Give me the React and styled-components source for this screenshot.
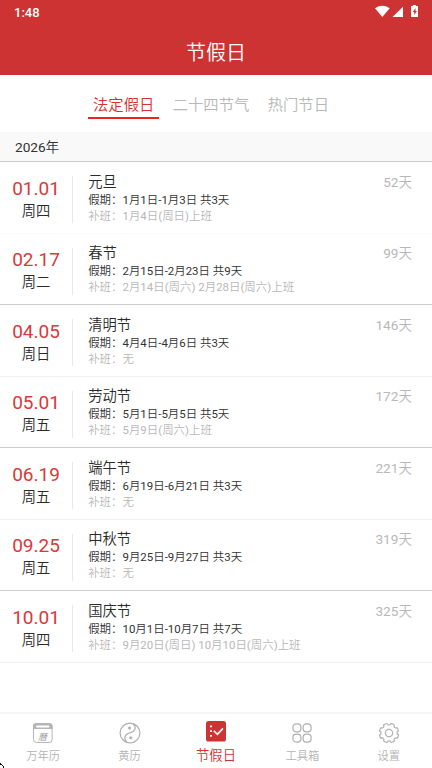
import React from 'react'
import styled, { createGlobalStyle } from 'styled-components'

const holidays = [
  { date: '01.01', week: '周四', name: '元旦', period: '1月1日-1月3日 共3天', work: '1月4日(周日)上班', left: 52 },
  { date: '02.17', week: '周二', name: '春节', period: '2月15日-2月23日 共9天', work: '2月14日(周六) 2月28日(周六)上班', left: 99 },
  { date: '04.05', week: '周日', name: '清明节', period: '4月4日-4月6日 共3天', work: '无', left: 146 },
  { date: '05.01', week: '周五', name: '劳动节', period: '5月1日-5月5日 共5天', work: '5月9日(周六)上班', left: 172 },
  { date: '06.19', week: '周五', name: '端午节', period: '6月19日-6月21日 共3天', work: '无', left: 221 },
  { date: '09.25', week: '周五', name: '中秋节', period: '9月25日-9月27日 共3天', work: '无', left: 319 },
  { date: '10.01', week: '周四', name: '国庆节', period: '10月1日-10月7日 共7天', work: '9月20日(周日) 10月10日(周六)上班', left: 325 },
]

const tabs = ['法定假日', '二十四节气', '热门节日']

function CalendarIcon() {
  return (
    <svg width="22" height="22" viewBox="0 0 22 22" fill="none">
      <rect x="1.5" y="1.5" width="18.6" height="19" rx="3" stroke="#b5b5b5" />
      <path d="M1 7V4.5Q1 1 4.5 1h12.6Q20.6 1 20.6 4.5V7z" fill="#b5b5b5" />
      <rect x="4" y="3.6" width="13.5" height="2" rx="1" fill="#fff" />
      <text x="6" y="18" fontSize="9" fontStyle="italic" fill="#959595">曆</text>
    </svg>
  )
}

function TaijiIcon() {
  return (
    <svg width="22" height="22" viewBox="0 0 22 22" fill="none" stroke="#b0b0b0" strokeWidth="1.2">
      <circle cx="11" cy="11" r="9.9" />
      <path d="M14.2 1.8C18 5.5 16 9.5 11.5 10.7C5.5 12.2 4.2 16.5 7.8 20.2" />
      <circle cx="10.5" cy="6" r="1.5" fill="#b0b0b0" stroke="none" />
      <circle cx="11.7" cy="15.8" r="1.5" fill="#b0b0b0" stroke="none" />
    </svg>
  )
}

function ChecklistIcon() {
  return (
    <svg width="22" height="22" viewBox="0 0 22 22" fill="none">
      <rect x="1" y="1" width="20" height="20.5" rx="2.6" fill="#cd3333" />
      <path d="M5 5.5h2v1.8H5zM5 10.2h2V12H5zM5 15h2v1.8H5z" fill="#fff" />
      <path d="M8.8 10.8l3.6 3.6 5.6-6" stroke="#fff" strokeWidth="1.6" />
    </svg>
  )
}

function ToolsIcon() {
  return (
    <svg width="22" height="22" viewBox="0 0 22 22" fill="none" stroke="#b0b0b0" strokeWidth="1.2">
      <rect x="1.9" y="1.9" width="8" height="8" rx="3.3" />
      <rect x="12.1" y="1.9" width="8" height="8" rx="3.3" />
      <rect x="1.9" y="12.1" width="8" height="8" rx="3.3" />
      <rect x="12.1" y="12.1" width="8" height="8" rx="3.3" />
    </svg>
  )
}

function GearIcon() {
  const notches = [0, 45, 90, 135, 180, 225, 270, 315]
  return (
    <svg width="22" height="22" viewBox="0 0 22 22" fill="none" stroke="#b0b0b0" strokeWidth="1.2">
      <circle cx="11" cy="11" r="3.7" />
      {notches.map((a) => (
        <path
          key={a}
          transform={`rotate(${a} 11 11)`}
          d="M9.2 1.5Q9.4 3.1 11 3.1T12.8 1.5Q14.9 1.8 16.4 3"
        />
      ))}
    </svg>
  )
}

const navItems = [
  { label: '万年历', icon: <CalendarIcon /> },
  { label: '黄历', icon: <TaijiIcon /> },
  { label: '节假日', icon: <ChecklistIcon />, active: true },
  { label: '工具箱', icon: <ToolsIcon /> },
  { label: '设置', icon: <GearIcon /> },
]

function App() {
  return (
    <>
      <GlobalStyle />
      <Page>
        <Header>
          <StatusBar>
            <Clock>1:48</Clock>
            <svg width="46" height="14" viewBox="0 0 46 14" fill="#fff">
              <path d="M1 3.2Q8.3-1.7 15.7 3.2L8.3 12z" />
              <path d="M29 1.7V12H18.5z" />
              <path d="M37 1h1.8V0H42v1h2v11h-7zM41.5 3l-2.7 4h1.4v3l2.7-4h-1.4z" fillRule="evenodd" />
            </svg>
          </StatusBar>
          <Title>节假日</Title>
        </Header>
        <Tabs>
          {tabs.map((tab, i) => (
            <Tab key={tab} $active={i === 0}>{tab}</Tab>
          ))}
        </Tabs>
        <Year>2026年</Year>
        <List>
          {holidays.map((item, i) => (
            <Row key={item.date} $strong={i % 2 === 1} $first={i === 0}>
              <DateBox>
                <Day>{item.date}</Day>
                <Week>{item.week}</Week>
              </DateBox>
              <Divider />
              <Info>
                <Name>{item.name}</Name>
                <Detail>假期：{item.period}</Detail>
                <Detail $muted>补班：{item.work}</Detail>
              </Info>
              <Left>{item.left}天</Left>
            </Row>
          ))}
        </List>
        <Nav>
          {navItems.map((item) => (
            <NavItem key={item.label} $active={item.active}>
              {item.icon}
              <span>{item.label}</span>
            </NavItem>
          ))}
        </Nav>
        <Corner width="5" height="5" viewBox="0 0 5 5">
          <path d="M0 0h1v1H0zM1 1h1v1H1zM2 2h1v1H2zM3 3h1v2H3zM0 1h1v1H0z" fill="#111" />
        </Corner>
      </Page>
    </>
  )
}

export default App

const GlobalStyle = createGlobalStyle`
  * {
    box-sizing: border-box;
  }
  body {
    margin: 0;
    background: #fff;
    font-family: Roboto, "Noto Sans CJK SC DemiLight", "Noto Sans CJK SC Light", "Noto Sans CJK SC", sans-serif;
    font-weight: 400;
  }
`

const Page = styled.div`
  position: relative;
  display: flex;
  flex-direction: column;
  width: 432px;
  height: 768px;
  overflow: hidden;
  background: #fff;
`

const Header = styled.header`
  flex: none;
  height: 75px;
  background: #cd3333;
  color: #fff;
`

const StatusBar = styled.div`
  display: flex;
  justify-content: space-between;
  height: 28px;
  padding: 5px 12px 0 14px;
`

const Clock = styled.span`
  font-size: 13px;
  font-weight: 500;
  line-height: 15px;
`

const Title = styled.h1`
  margin: 0;
  font-size: 20px;
  font-weight: 400;
  line-height: 50px;
  text-align: center;
`

const Tabs = styled.div`
  display: flex;
  flex: none;
  justify-content: center;
  gap: 8.5px;
  height: 57px;
  padding: 16px 10px 0 0;
`

const Tab = styled.div`
  height: 28px;
  padding: 0 5px;
  border-bottom: 2px solid ${(props) => (props.$active ? '#ee2222' : 'transparent')};
  color: ${(props) => (props.$active ? '#d63030' : '#b8b8b8')};
  font-size: 15.3px;
  line-height: 28px;
  white-space: nowrap;
`

const Year = styled.div`
  flex: none;
  height: 30px;
  padding-left: 15px;
  border-bottom: 1px solid #c9c9c9;
  background: #f9f9f9;
  color: #333;
  font-size: 13.6px;
  line-height: 30px;
`

const List = styled.div`
  flex: 1;
`

const Row = styled.div`
  display: flex;
  height: 71.5px;
  padding-right: 20px;
  border-bottom: 1px solid ${(props) => (props.$strong ? '#cbcbcb' : props.$first ? '#fafafa' : '#f0f0f0')};
`

const DateBox = styled.div`
  width: 72px;
  padding-top: 14.5px;
  text-align: center;
`

const Day = styled.div`
  color: #d63a3a;
  font-size: 19px;
  line-height: 24px;
`

const Week = styled.div`
  color: #2a2a2a;
  font-size: 14.3px;
  line-height: 21px;
`

const Divider = styled.div`
  width: 1px;
  height: 47px;
  margin-top: 14px;
  background: #e8e8e8;
`

const Info = styled.div`
  flex: 1;
  padding: 9.8px 0 0 15.2px;
`

const Name = styled.div`
  color: #2a2a2a;
  font-size: 14.3px;
  line-height: 20px;
`

const Detail = styled.div`
  color: ${(props) => (props.$muted ? '#b8b8b8' : '#333')};
  font-size: 11.45px;
  line-height: 16px;
  white-space: nowrap;
`

const Left = styled.div`
  padding-top: 9.8px;
  color: #b8b8b8;
  font-size: 13.6px;
  line-height: 20px;
`

const Nav = styled.nav`
  display: flex;
  flex: none;
  height: 56px;
  border-top: 2px solid #f6f6f6;
`

const NavItem = styled.div`
  display: flex;
  flex: 1;
  flex-direction: column;
  align-items: center;
  padding-top: ${(props) => (props.$active ? 6 : 8)}px;
  color: ${(props) => (props.$active ? '#cd3333' : '#b3b3b3')};
  font-size: ${(props) => (props.$active ? 13.3 : 11.3)}px;

  svg {
    flex: none;
  }

  span {
    line-height: ${(props) => (props.$active ? 28 : 26)}px;
  }
`

const Corner = styled.svg`
  position: absolute;
  left: 0;
  bottom: 0;
`
